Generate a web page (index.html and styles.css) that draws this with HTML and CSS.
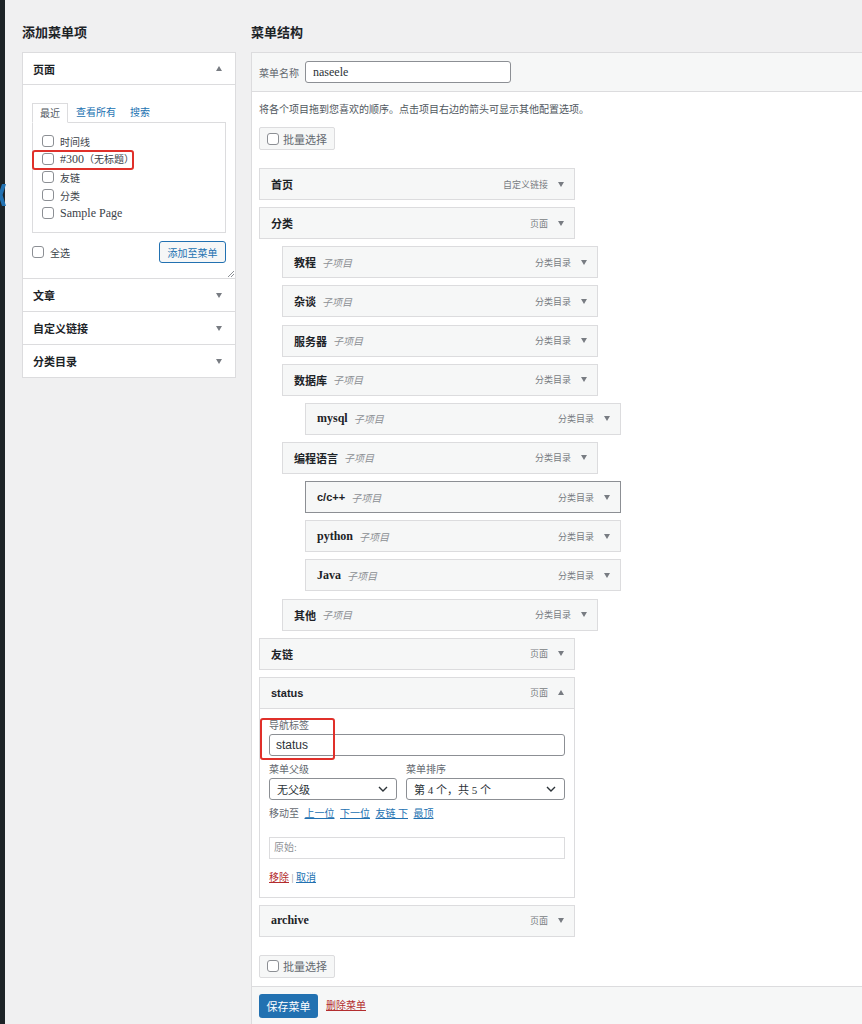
FILE: index.html
```html
<!DOCTYPE html>
<html lang="zh-CN">
  <head>
    <meta charset="UTF-8">
    <meta name="viewport" content="width=device-width, initial-scale=1.0">
    <title>菜单</title>
    <link rel="stylesheet" href="styles.css">
  </head>
  <body>
    <div id="adminMenu">
      <svg class="menu-arrow" width="6" height="22" viewBox="0 0 6 22"><polygon points="2,0 6,0 2.6,11 6,22 2,22 -1.5,11" fill="#2271b1"/></svg>
    </div>

    <div id="wpbody" class="flex">
      <!-- Add menu items -->
      <div id="sidebar">
        <h2 class="col-title">添加菜单项</h2>
        <div class="accordion">
          <div class="acc-section open">
            <div class="acc-head flex">
              <h3>页面</h3>
              <span class="caret up"></span>
            </div>
            <div class="acc-body">
              <ul class="tabs flex">
                <li class="tab active">最近</li>
                <li class="tab">查看所有</li>
                <li class="tab">搜索</li>
              </ul>
              <div class="tab-panel">
                <label class="check-row flex"><span class="cb"></span>时间线</label>
                <label class="check-row flex marked"><span class="cb"></span><span><span class="latin">#300</span>（无标题）</span><span class="mark"></span></label>
                <label class="check-row flex"><span class="cb"></span>友链</label>
                <label class="check-row flex"><span class="cb"></span>分类</label>
                <label class="check-row flex"><span class="cb"></span><span class="latin">Sample Page</span></label>
              </div>
              <div class="acc-actions flex">
                <label class="check-row flex"><span class="cb"></span>全选</label>
                <button class="btn-secondary">添加至菜单</button>
              </div>
              <svg class="resize" width="7" height="7" viewBox="0 0 7 7"><path d="M1 7L7 1M4 7L7 4" stroke="#8c8f94" stroke-width="1"/></svg>
            </div>
          </div>
          <div class="acc-section">
            <div class="acc-head flex"><h3>文章</h3><span class="caret"></span></div>
          </div>
          <div class="acc-section">
            <div class="acc-head flex"><h3>自定义链接</h3><span class="caret"></span></div>
          </div>
          <div class="acc-section">
            <div class="acc-head flex"><h3>分类目录</h3><span class="caret"></span></div>
          </div>
        </div>
      </div>

      <!-- Menu structure -->
      <div id="menuColumn">
        <h2 class="col-title">菜单结构</h2>
        <div class="menu-edit">
          <div class="menu-header flex">
            <label class="name-label">菜单名称</label>
            <input class="menu-name" type="text" value="naseele" readonly>
          </div>

          <div class="menu-body">
            <p class="hint">将各个项目拖到您喜欢的顺序。点击项目右边的箭头可显示其他配置选项。</p>
            <button class="bulk flex"><span class="cb"></span>批量选择</button>

            <ul class="menu-items">
              <li class="menu-item depth-0">
                <div class="item-bar flex"><span class="item-title">首页</span><span class="item-type">自定义链接</span><span class="caret"></span></div>
              </li>
              <li class="menu-item depth-0">
                <div class="item-bar flex"><span class="item-title">分类</span><span class="item-type">页面</span><span class="caret"></span></div>
              </li>
              <li class="menu-item depth-1">
                <div class="item-bar flex"><span class="item-title">教程</span><span class="item-sub">子项目</span><span class="item-type">分类目录</span><span class="caret"></span></div>
              </li>
              <li class="menu-item depth-1">
                <div class="item-bar flex"><span class="item-title">杂谈</span><span class="item-sub">子项目</span><span class="item-type">分类目录</span><span class="caret"></span></div>
              </li>
              <li class="menu-item depth-1">
                <div class="item-bar flex"><span class="item-title">服务器</span><span class="item-sub">子项目</span><span class="item-type">分类目录</span><span class="caret"></span></div>
              </li>
              <li class="menu-item depth-1">
                <div class="item-bar flex"><span class="item-title">数据库</span><span class="item-sub">子项目</span><span class="item-type">分类目录</span><span class="caret"></span></div>
              </li>
              <li class="menu-item depth-2">
                <div class="item-bar flex"><span class="item-title latin">mysql</span><span class="item-sub">子项目</span><span class="item-type">分类目录</span><span class="caret"></span></div>
              </li>
              <li class="menu-item depth-1">
                <div class="item-bar flex"><span class="item-title">编程语言</span><span class="item-sub">子项目</span><span class="item-type">分类目录</span><span class="caret"></span></div>
              </li>
              <li class="menu-item depth-2 focused">
                <div class="item-bar flex"><span class="item-title sans">c/c++</span><span class="item-sub">子项目</span><span class="item-type">分类目录</span><span class="caret"></span></div>
              </li>
              <li class="menu-item depth-2">
                <div class="item-bar flex"><span class="item-title latin">python</span><span class="item-sub">子项目</span><span class="item-type">分类目录</span><span class="caret"></span></div>
              </li>
              <li class="menu-item depth-2">
                <div class="item-bar flex"><span class="item-title latin">Java</span><span class="item-sub">子项目</span><span class="item-type">分类目录</span><span class="caret"></span></div>
              </li>
              <li class="menu-item depth-1">
                <div class="item-bar flex"><span class="item-title">其他</span><span class="item-sub">子项目</span><span class="item-type">分类目录</span><span class="caret"></span></div>
              </li>
              <li class="menu-item depth-0">
                <div class="item-bar flex"><span class="item-title">友链</span><span class="item-type">页面</span><span class="caret"></span></div>
              </li>
              <li class="menu-item depth-0 expanded">
                <div class="item-bar flex"><span class="item-title sans">status</span><span class="item-type">页面</span><span class="caret up"></span></div>
                <div class="item-settings">
                  <span class="mark"></span>
                  <label class="field-label">导航标签</label>
                  <input class="settings-input" type="text" value="status" readonly>
                  <div class="select-row flex">
                    <div class="select-col parent-col">
                      <label class="field-label">菜单父级</label>
                      <div class="select flex"><span>无父级</span><svg width="10" height="6" viewBox="0 0 10 6"><path d="M1 1l4 4 4-4" fill="none" stroke="#2c3338" stroke-width="1.4"/></svg></div>
                    </div>
                    <div class="select-col flex-grow-1">
                      <label class="field-label">菜单排序</label>
                      <div class="select flex"><span>第 4 个，共 5 个</span><svg width="10" height="6" viewBox="0 0 10 6"><path d="M1 1l4 4 4-4" fill="none" stroke="#2c3338" stroke-width="1.4"/></svg></div>
                    </div>
                  </div>
                  <p class="move-row">移动至 <a href="#">上一位</a> <a href="#">下一位</a> <a href="#">友链 下</a> <a href="#">最顶</a></p>
                  <div class="original">原始:</div>
                  <p class="item-actions"><a href="#" class="link-delete">移除</a> <span class="sep">|</span> <a href="#">取消</a></p>
                </div>
              </li>
              <li class="menu-item depth-0">
                <div class="item-bar flex"><span class="item-title latin">archive</span><span class="item-type">页面</span><span class="caret"></span></div>
              </li>
            </ul>

            <button class="bulk flex"><span class="cb"></span>批量选择</button>
          </div>

          <div class="menu-footer flex">
            <button class="btn-primary">保存菜单</button>
            <a href="#" class="link-delete">删除菜单</a>
          </div>
        </div>
      </div>
    </div>
  </body>
</html>
```

FILE: styles.css
```css
/* Variables */
:root {
	--page-bg: #f0f0f1;
	--dark: #1d2327;
	--text: #2c3338;
	--muted: #646970;
	--light-muted: #8c8f94;
	--border: #dcdcde;
	--bar-bg: #f6f7f7;
	--blue: #2271b1;
	--red: #b32d2e;
	--mark: #e0302a;
}

/* Resets */
* {
	margin: 0;
	padding: 0;
	box-sizing: border-box;
}

body {
	font-family: "Liberation Serif", "Noto Sans CJK SC", serif;
	font-size: 10px;
	color: var(--text);
	background: var(--page-bg);
	display: flex;
	min-height: 100vh;
	overflow: hidden;
}

ul {
	list-style: none;
}

a {
	color: var(--blue);
}

button,
input {
	font-family: inherit;
}

/* Helpers */
.flex {
	display: flex;
}

.flex-grow-1 {
	flex-grow: 1;
}

.sans {
	font-family: "Liberation Sans", "Noto Sans CJK SC", sans-serif;
}

.latin {
	font-size: 12px;
}

.caret {
	width: 0;
	height: 0;
	border-left: 3.5px solid transparent;
	border-right: 3.5px solid transparent;
	border-top: 5px solid #787c82;
	flex-shrink: 0;
}

.caret.up {
	border-top: 0;
	border-bottom: 5px solid #787c82;
}

.cb {
	width: 12px;
	height: 12px;
	border: 1px solid var(--light-muted);
	border-radius: 3px;
	background: #fff;
	flex-shrink: 0;
}

.mark {
	position: absolute;
	border: 2px solid var(--mark);
	border-radius: 3px;
	pointer-events: none;
}

/* Admin menu edge */
#adminMenu {
	width: 5px;
	background: var(--dark);
	position: relative;
	flex-shrink: 0;
}

.menu-arrow {
	position: absolute;
	left: 0;
	top: 184px;
}

#wpbody {
	padding-left: 17px;
	gap: 15px;
	align-items: flex-start;
}

.col-title {
	font-family: "Noto Sans CJK SC", sans-serif;
	font-size: 13px;
	font-weight: 700;
	line-height: 20px;
	color: var(--dark);
	margin: 22px 0 10px;
}

/* Sidebar accordion */
#sidebar {
	width: 214px;
	flex-shrink: 0;
}

.accordion {
	background: #fff;
	border: 1px solid var(--border);
}

.acc-section + .acc-section {
	border-top: 1px solid var(--border);
}

.acc-head {
	height: 32px;
	padding: 0 13px 0 10px;
	align-items: center;
	justify-content: space-between;
}

.acc-head h3 {
	font-family: "Noto Sans CJK SC", sans-serif;
	font-size: 11px;
	font-weight: 700;
	color: var(--dark);
}

.open .acc-head {
	border-bottom: 1px solid var(--border);
}

.acc-body {
	position: relative;
	padding: 18px 9px 15px;
}

.tabs {
	margin-bottom: -1px;
	position: relative;
}

.tab {
	height: 20px;
	line-height: 19px;
	padding: 0 7px;
	color: var(--blue);
}

.tab.active {
	background: #fff;
	border: 1px solid var(--border);
	border-bottom-color: #fff;
	color: #50575e;
	margin-right: 1px;
}

.tab-panel {
	border: 1px solid var(--border);
	padding: 9px 9px 10px;
}

.check-row {
	position: relative;
	height: 18px;
	align-items: center;
	gap: 6px;
	color: #3c434a;
}

.check-row .mark {
	left: -10px;
	top: 0;
	width: 102px;
	height: 20px;
}

.acc-actions {
	margin-top: 8px;
	align-items: center;
	justify-content: space-between;
}

.btn-secondary {
	height: 22px;
	width: 67px;
	border: 1px solid var(--blue);
	border-radius: 3px;
	background: var(--bar-bg);
	color: var(--blue);
	font-size: 10px;
}

.resize {
	position: absolute;
	right: 1px;
	bottom: 1px;
}

/* Menu structure */
#menuColumn {
	width: 630px;
	flex-shrink: 0;
}

.menu-edit {
	background: #fff;
	border: 1px solid var(--border);
}

.menu-header {
	height: 39px;
	padding: 0 7px;
	align-items: center;
	background: var(--bar-bg);
	border-bottom: 1px solid var(--border);
}

.name-label {
	color: var(--muted);
	margin-right: 6px;
}

.menu-name {
	width: 206px;
	height: 22px;
	border: 1px solid var(--light-muted);
	border-radius: 3px;
	padding: 0 7px;
	font-size: 12px;
	color: var(--text);
	outline: none;
}

.menu-body {
	padding: 0 7px 8px;
}

.hint {
	margin-top: 11px;
	line-height: 14px;
	color: #50575e;
}

.bulk {
	margin-top: 10px;
	height: 23px;
	padding: 0 7px;
	gap: 4px;
	align-items: center;
	border: 1px solid var(--border);
	border-radius: 2px;
	background: var(--bar-bg);
	color: var(--muted);
	font-size: 11px;
}

.menu-items {
	margin: 18px 0 18px;
}

.menu-items + .bulk {
	margin-top: 0;
}

.menu-item {
	width: 316px;
	margin-bottom: 7.15px;
}

.depth-1 {
	margin-left: 23px;
}

.depth-2 {
	margin-left: 46px;
}

.item-bar {
	height: 32px;
	padding: 0 10px 0 11px;
	align-items: center;
	border: 1px solid var(--border);
	background: var(--bar-bg);
}

.focused .item-bar {
	border-color: var(--light-muted);
}

.item-title {
	font-size: 11px;
	font-weight: 700;
	color: var(--dark);
}

.item-title.latin {
	font-size: 12px;
}

.item-sub {
	margin-left: 6px;
	font-style: italic;
	color: var(--light-muted);
}

.item-type {
	margin-left: auto;
	margin-right: 10px;
	font-size: 9px;
	color: #787c82;
}

/* Expanded item */
.item-settings {
	position: relative;
	border: 1px solid var(--border);
	border-top: 0;
	padding: 10px 9px 12px;
}

.item-settings .mark {
	left: 0;
	top: 9px;
	width: 75px;
	height: 42px;
}

.field-label {
	display: block;
	line-height: 14px;
	color: var(--muted);
}

.settings-input {
	width: 100%;
	height: 22px;
	margin-top: 1px;
	border: 1px solid var(--light-muted);
	border-radius: 3px;
	padding: 0 6px;
	font-family: "Liberation Sans", sans-serif;
	font-size: 12px;
	color: var(--text);
	outline: none;
}

.select-row {
	margin-top: 7px;
	gap: 9px;
}

.parent-col {
	width: 128px;
}

.select {
	height: 22px;
	margin-top: 1px;
	padding: 0 8px 0 7px;
	align-items: center;
	justify-content: space-between;
	border: 1px solid var(--light-muted);
	border-radius: 3px;
	font-size: 11px;
	color: var(--text);
}

.move-row {
	margin-top: 7px;
	line-height: 14px;
	color: var(--muted);
}

.move-row a {
	margin-left: 3px;
}

.original {
	margin-top: 16px;
	height: 22px;
	line-height: 20px;
	padding: 0 4px;
	border: 1px solid var(--border);
	color: var(--light-muted);
}

.item-actions {
	margin-top: 12px;
	line-height: 14px;
}

.sep {
	color: var(--light-muted);
}

.link-delete {
	color: var(--red);
}

/* Footer */
.menu-footer {
	height: 60px;
	padding: 7px 7px;
	gap: 8px;
	align-items: flex-start;
	background: var(--bar-bg);
	border-top: 1px solid var(--border);
}

.btn-primary {
	height: 24px;
	width: 59px;
	border: 0;
	border-radius: 3px;
	background: var(--blue);
	color: #fff;
	font-size: 11px;
}

.menu-footer .link-delete {
	line-height: 24px;
}
```
